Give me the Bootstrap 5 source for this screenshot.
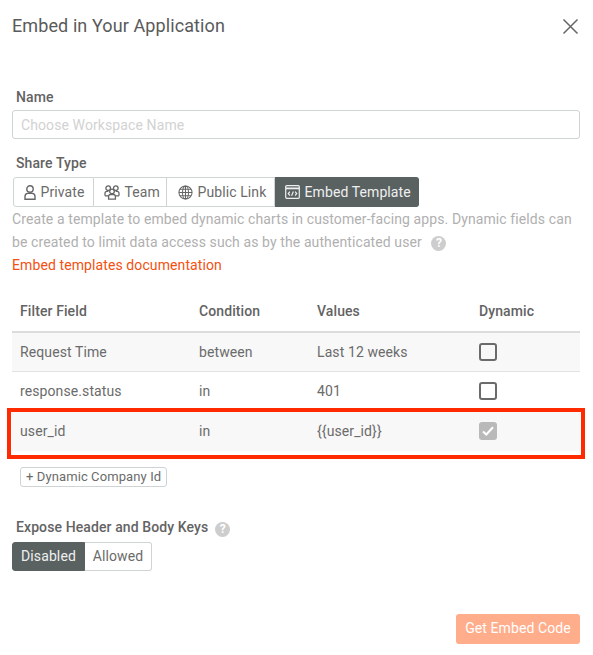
<!DOCTYPE html>
<html lang="en">
<head>
<meta charset="utf-8">
<title>Embed in Your Application</title>
<link href="https://cdn.jsdelivr.net/npm/bootstrap@5.3.0/dist/css/bootstrap.min.css" rel="stylesheet">
<style>
html,body{height:100%;}
body{font-family:Roboto,"Liberation Sans",sans-serif;color:#6b6b6b;background:#fff;font-size:14px;letter-spacing:.1px;}
.dlg{width:593px;height:655px;overflow:hidden;display:flex;flex-direction:column;padding:0 13px 0 12px;}
.dlg>*{flex-shrink:0;}
.dlg-head{height:52px;}
.dlg-title{font-size:18px;font-weight:400;color:#5a5a5a;margin:0;line-height:52px;letter-spacing:.1px;}
.dlg-close{background:none;border:0;padding:0;width:17px;height:17px;display:block;margin:-5px 1px 0 0;}
.fld-label{font-weight:500;color:#636363;font-size:14px;padding-left:4px;line-height:18px;margin:0;}
.lbl-name{margin-top:36px;}
.lbl-share{margin-top:15px;}
.lbl-expose{margin-top:31px;height:18px;display:flex;align-items:center;}
.name-input{height:29px;min-height:29px;margin-top:4px;font-size:14px;padding:0 8px;border:1px solid #ced4d4;border-radius:3px;letter-spacing:.1px;color:#666;}
.name-input::placeholder{color:#d2d2d2;}
.seg{display:inline-flex;align-self:flex-start;}
.seg-share{margin:5px 0 0 1px;}
.seg-expose{margin-top:6px;}
.seg-btn{font-size:14px;height:30px;padding:0;color:#6b6b6b;background:#fff;border:1px solid #ced4d4;border-left-width:0;display:flex;align-items:center;gap:4.5px;letter-spacing:.1px;border-radius:0;}
.seg-btn:first-child{border-left-width:1px;border-radius:3px 0 0 3px;}
.seg-btn:last-child{border-radius:0 3px 3px 0;}
.seg-btn.on{background:#5a6161;border-color:#5a6161;color:#eef0f0;}
.sb-priv{width:81px;padding-left:10px;}
.sb-team{width:73px;padding-left:10px;}
.sb-pub{width:108px;padding-left:11px;}
.sb-emb{width:144px;padding-left:10px;}
.seg-expose .seg-btn{height:29px;justify-content:center;}
.sb-dis{width:73px;}
.sb-all{width:67px;}
.seg-btn svg{flex:none;}
.desc{color:#b0b0b0;line-height:23px;margin:1px 0 0;font-size:14px;}
.doc-link{color:#f4500f;text-decoration:none;line-height:23px;display:block;}
.hint{display:inline-flex;width:15px;height:15px;border-radius:50%;background:#cdcdcd;color:#fff;font-size:12px;font-weight:700;align-items:center;justify-content:center;letter-spacing:0;line-height:1;}
.hint-a{margin-left:6px;}
.hint-b{margin:5px 0 0 7px;}
.tbl-wrap{position:relative;margin-top:25px;}
.flt{margin:0;width:568px;table-layout:fixed;--bs-table-bg:transparent;color:#6b6b6b;}
.c1{width:179px;}.c2{width:118px;}.c3{width:162px;}
.flt th{font-weight:500;color:#636363;padding:0 8px;height:30px;vertical-align:top;line-height:18px;border-bottom:2px solid #dcdcdc;}
.flt td{padding:0 8px;height:39.5px;vertical-align:middle;border-bottom:1px solid #e2e2e2;color:#6b6b6b;}
.flt tr.alt td{background:#f8f8f8;}
.flt tr:last-child td{border-bottom:0;}
.box{display:block;width:18px;height:18px;border:2px solid #6b6b6b;border-radius:3px;background:#fff;}
.alt .box{background:transparent;}
.alt .box.done,.box.done{border:0;background:#b9b9b9;display:flex;align-items:center;justify-content:center;}
.redbox{position:absolute;left:-5px;top:106px;width:578px;height:51px;border:4px solid #ff2a00;pointer-events:none;}
.add-row{margin-top:16px;}
.add-btn{font-size:13px;height:20px;padding:0 5px;border:1px solid #ced4d4;border-radius:3px;background:#fff;color:#6b6b6b;letter-spacing:.1px;line-height:18px;margin-left:8px;display:block;}
.cta-row{margin-top:43px;}
.cta{background:#ffad8a;border:0;border-radius:3px;color:#fff;height:30px;width:124px;font-size:14px;padding:0;letter-spacing:.1px;}
</style>
</head>
<body>
<div class="dlg">
  <div class="dlg-head d-flex justify-content-between align-items-center">
    <h5 class="dlg-title">Embed in Your Application</h5>
    <button class="dlg-close" type="button" aria-label="Close">
      <svg width="17" height="17" viewBox="0 0 17 17"><path d="M1.5 1.5l14 14M15.5 1.5l-14 14" stroke="#666" stroke-width="1.5" fill="none"/></svg>
    </button>
  </div>

  <p class="fld-label lbl-name">Name</p>
  <input class="form-control name-input" type="text" placeholder="Choose Workspace Name">

  <p class="fld-label lbl-share">Share Type</p>
  <div class="seg seg-share">
    <button class="seg-btn sb-priv" type="button">
      <svg width="12" height="15" viewBox="0 0 12 15" fill="none" stroke="#666" stroke-width="1.4"><circle cx="6" cy="4" r="3.2"/><path d="M1 14.2V11.6C1 9.2 2.3 8.4 3.8 8.4h4.4c1.5 0 2.8.8 2.8 3.2v2.6z"/></svg>
      Private
    </button>
    <button class="seg-btn sb-team" type="button">
      <svg width="16" height="15" viewBox="0 0 16 15" fill="none" stroke="#666" stroke-width="1.3"><circle cx="4.2" cy="3.2" r="2.3"/><circle cx="11.8" cy="3.2" r="2.3"/><circle cx="8" cy="6.4" r="2.3"/><path d="M1 10.8V8.3c0-1.3.9-2 2-2h1.3M15 10.8V8.3c0-1.3-.9-2-2-2h-1.3M1 10.8h3.4M15 10.8h-3.4M4.6 14.2v-2.6c0-1.2.9-2.1 2-2.1h2.8c1.1 0 2 .9 2 2.1v2.6z"/></svg>
      Team
    </button>
    <button class="seg-btn sb-pub" type="button">
      <svg width="15" height="15" viewBox="0 0 16 16" fill="none" stroke="#666" stroke-width="1.1"><circle cx="8" cy="8" r="7"/><ellipse cx="8" cy="8" rx="3.2" ry="7"/><path d="M8 1v14M1 8h14M2 4.5h12M2 11.5h12"/></svg>
      Public Link
    </button>
    <button class="seg-btn on sb-emb" type="button">
      <svg width="15" height="14" viewBox="0 0 15 14" fill="none" stroke="#eef0f0" stroke-width="1.2"><rect x=".7" y=".7" width="13.6" height="12.6" rx="1"/><path d="M.7 3.4h13.6" stroke-width="1.8"/><path d="M4.9 6.7L3.3 8.6l1.6 1.9M10.1 6.7l1.6 1.9-1.6 1.9M8.4 6.4l-1.8 4.4"/></svg>
      Embed Template
    </button>
  </div>

  <p class="desc">Create a template to embed dynamic charts in customer-facing apps. Dynamic fields can<br>be created to limit data access such as by the authenticated user <span class="hint hint-a">?</span></p>
  <a class="doc-link" href="#">Embed templates documentation</a>

  <div class="tbl-wrap">
    <table class="table flt">
      <colgroup><col class="c1"><col class="c2"><col class="c3"><col></colgroup>
      <thead><tr><th>Filter Field</th><th>Condition</th><th>Values</th><th>Dynamic</th></tr></thead>
      <tbody>
        <tr class="alt"><td>Request Time</td><td>between</td><td>Last 12 weeks</td><td><span class="box"></span></td></tr>
        <tr><td>response.status</td><td>in</td><td>401</td><td><span class="box"></span></td></tr>
        <tr class="alt"><td>user_id</td><td>in</td><td>{{user_id}}</td><td><span class="box done"><svg width="12" height="10" viewBox="0 0 12 10" fill="none" stroke="#fff" stroke-width="2"><path d="M1 5.5l3.3 3L11 1.2"/></svg></span></td></tr>
      </tbody>
    </table>
    <div class="redbox"></div>
  </div>

  <div class="add-row"><button class="add-btn" type="button">+ Dynamic Company Id</button></div>

  <p class="fld-label lbl-expose">Expose Header and Body Keys<span class="hint hint-b">?</span></p>
  <div class="seg seg-expose">
    <button class="seg-btn on sb-dis" type="button">Disabled</button>
    <button class="seg-btn sb-all" type="button">Allowed</button>
  </div>

  <div class="d-flex justify-content-end cta-row"><button class="cta" type="button">Get Embed Code</button></div>
</div>
<script src="https://cdn.jsdelivr.net/npm/bootstrap@5.3.0/dist/js/bootstrap.bundle.min.js"></script>
</body>
</html>
